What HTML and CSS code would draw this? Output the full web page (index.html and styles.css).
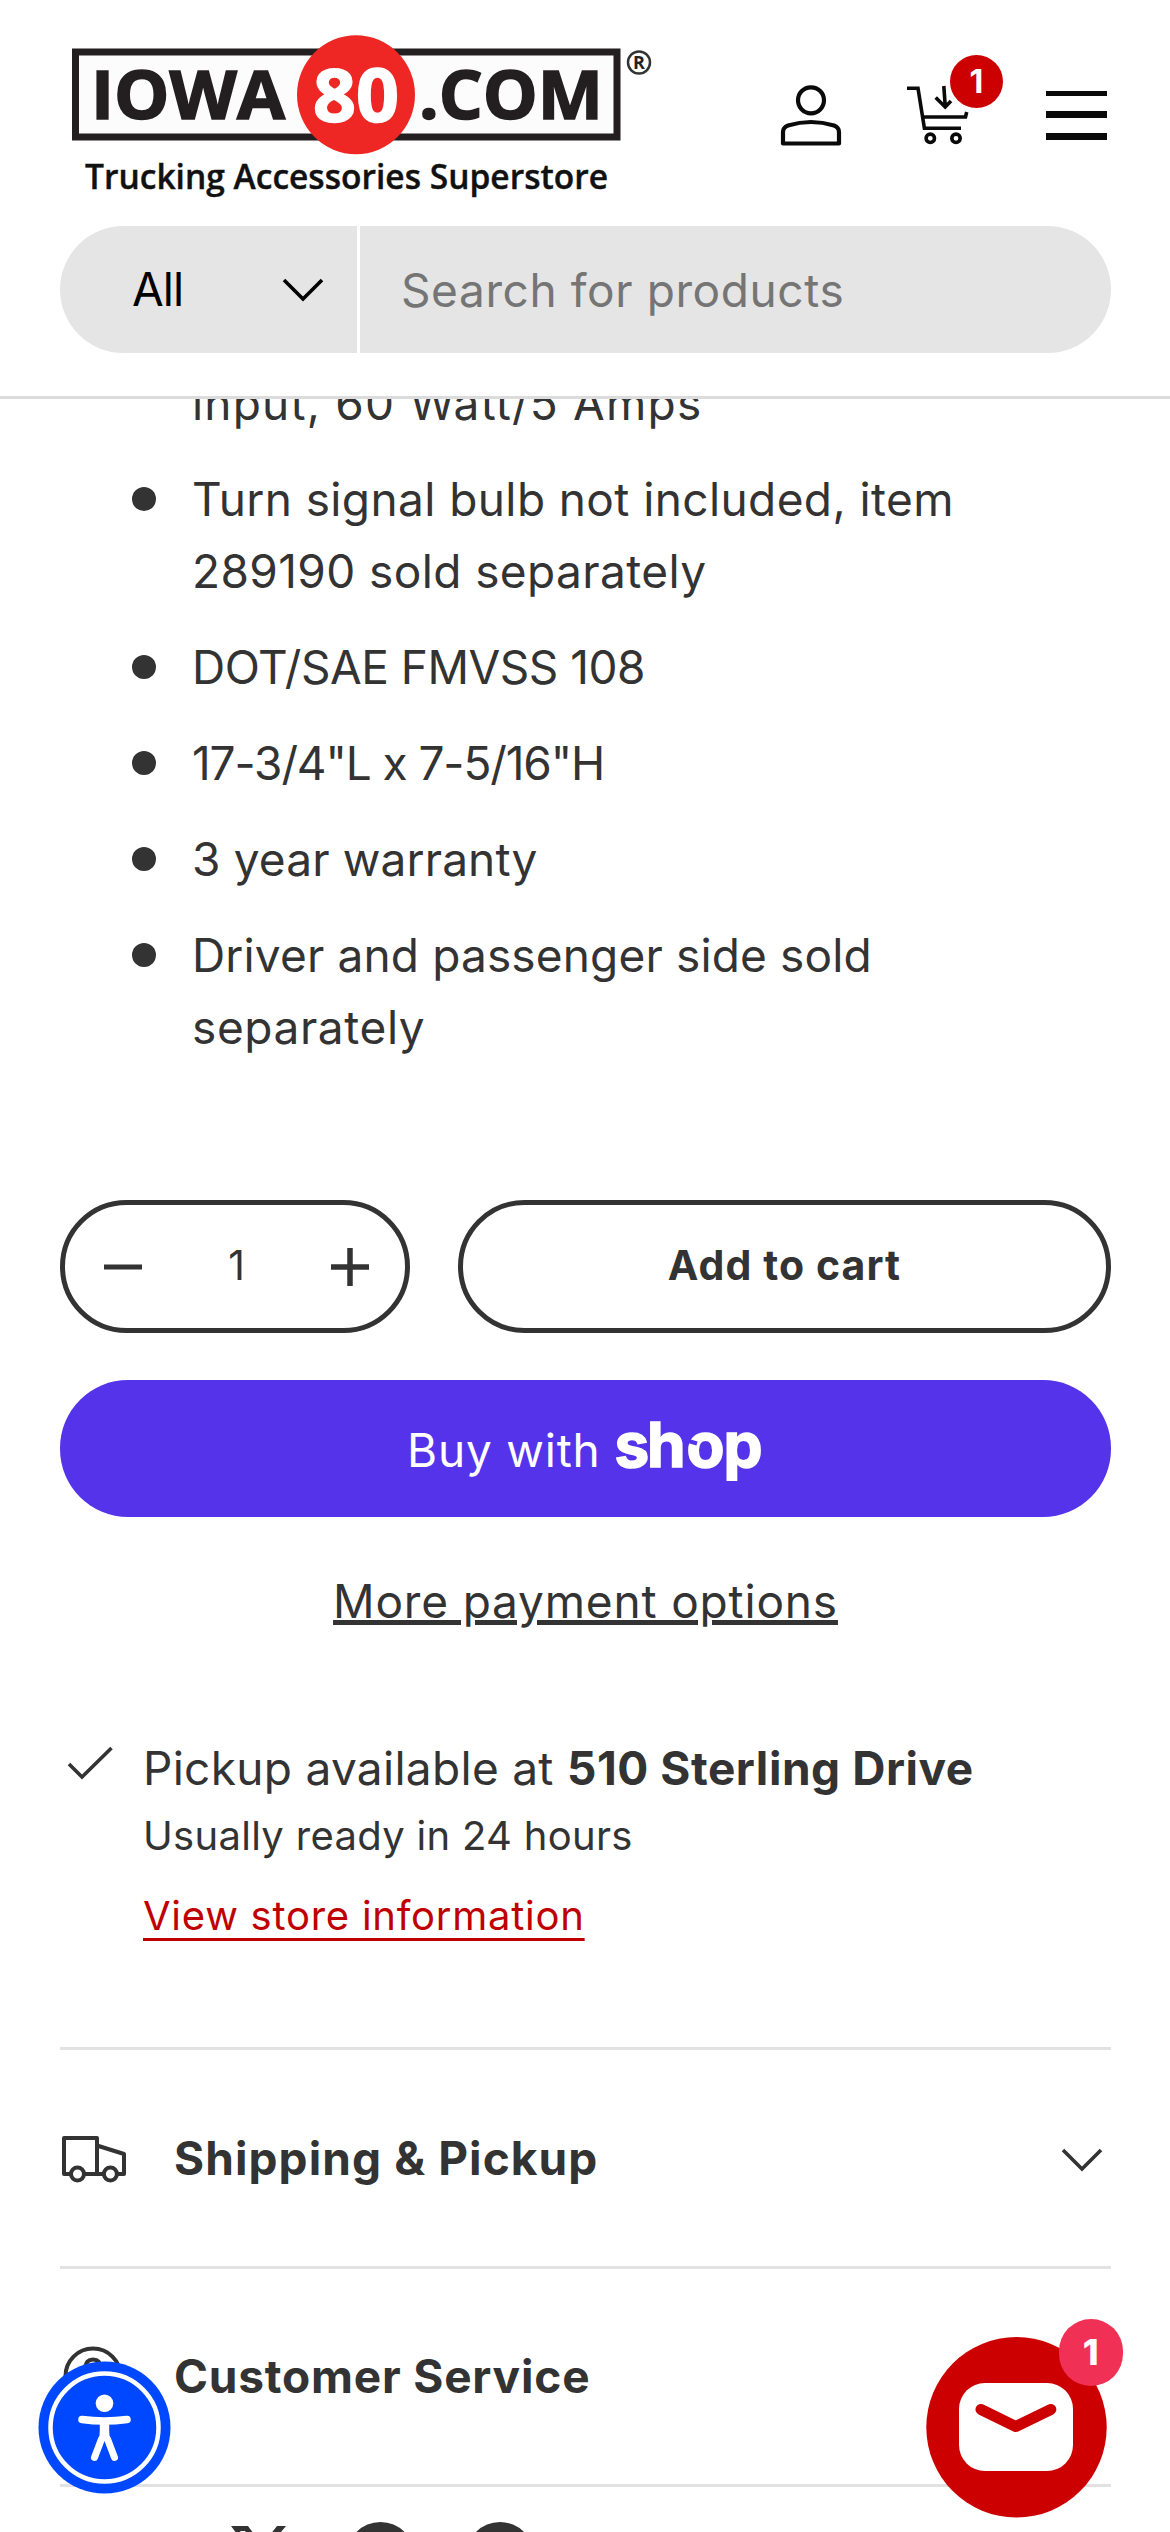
FILE: index.html
```html
<!DOCTYPE html>
<html lang="en">
<head>
<meta charset="utf-8">
<title>Iowa80.com</title>
<link rel="stylesheet" href="styles.css">
</head>
<body>
<header class="header">
  <div class="topbar">
    <svg class="logo" viewBox="60 20 610 190" width="610" height="190" font-family="Open Sans, sans-serif" font-weight="700">
      <rect x="75.500" y="52" width="541.500" height="85" fill="#fdfcfd" stroke="#231f20" stroke-width="7"/>
      <ellipse cx="356" cy="94.700" rx="59" ry="59.500" fill="#ee2724"/>
      <g font-size="66" stroke-width="1.600">
        <text x="91" y="119" textLength="194" lengthAdjust="spacingAndGlyphs" fill="#231f20" stroke="#231f20">IOWA</text>
        <text x="313" y="121.500" font-size="73" textLength="86" lengthAdjust="spacingAndGlyphs" fill="#fff" stroke="#fff">80</text>
        <text x="419" y="119" textLength="184" lengthAdjust="spacingAndGlyphs" fill="#231f20" stroke="#231f20">.COM</text>
      </g>
      <text x="85" y="188.500" font-size="34" font-weight="600" textLength="523" lengthAdjust="spacingAndGlyphs" fill="#111" stroke="#111" stroke-width=".4">Trucking Accessories Superstore</text>
      <circle cx="639" cy="62.500" r="11" fill="none" stroke="#333" stroke-width="2.500"/>
      <text x="633" y="69" font-size="18" fill="#222">R</text>
    </svg>
    <svg class="icon-user" viewBox="776 80 70 70" width="70" height="70" fill="none" stroke="#0a0a0a" stroke-width="4.200">
      <circle cx="811" cy="100.300" r="13"/>
      <path d="M783 143.500V132q0-4.500 5-6.500Q811 118.500 834 125.500q5 2 5 6.500v11.500z" stroke-linejoin="round"/>
    </svg>
    <div class="cart">
      <svg viewBox="900 76 80 74" width="80" height="74" fill="none" stroke="#0a0a0a" stroke-width="3.600">
        <path d="M907 88.300h11l6.400 40H961M923.500 117H965.500l1.200-5"/>
        <circle cx="930.300" cy="138.300" r="4.200"/><circle cx="956" cy="138.300" r="4.200"/>
        <path d="M943.800 86l1.500 21M935.700 97.500l9.500 9.500 5.800-6"/>
      </svg>
      <span class="cart-count">1</span>
    </div>
    <div class="menu"><i class="thin"></i><i></i><i></i></div>
  </div>
  <div class="search">
    <div class="search-type"><span class="all">All</span>
      <svg width="42" height="24" viewBox="0 0 42 24" fill="none" stroke="#000" stroke-width="3.600"><path d="M2 2l19 19L40 2"/></svg>
    </div>
    <div class="search-field">Search for products</div>
  </div>
</header>
<main class="main">
  <ul class="features">
    <li class="continued">input, 60 Watt/5 Amps</li>
    <li>Turn signal bulb not included, item<br>289190 sold separately</li>
    <li class="track-tight">DOT/SAE FMVSS 108</li>
    <li class="track-tighter">17-3/4"L x 7-5/16"H</li>
    <li class="track-snug">3 year warranty</li>
    <li class="track-snug">Driver and passenger side sold<br><span class="track-loose">separately</span></li>
  </ul>
  <div class="buy-row">
    <div class="qty">
      <svg width="38" height="38" viewBox="0 0 38 38"><path d="M0 19h38" stroke="#333" stroke-width="5"/></svg>
      <span>1</span>
      <svg width="38" height="38" viewBox="0 0 38 38"><path d="M0 19h38M19 0v38" stroke="#333" stroke-width="5.500"/></svg>
    </div>
    <div class="add">Add to cart</div>
  </div>
  <div class="shop-pay">
    <span class="buy-with">Buy with</span>
    <svg viewBox="610 1400 160 96" width="160" height="96"><text class="shop-word" x="614.500 647 686.500 723.500" y="1467">shop</text><path d="M685 1440l12 3.500" stroke="#5433eb" stroke-width="4"/></svg>
  </div>
  <div class="more"><span>More payment options</span></div>
  <div class="pickup">
    <svg width="50" height="40" viewBox="66 1745 50 40" fill="none" stroke="#333" stroke-width="3.600"><path d="M69 1764l13 13 29.500-29"/></svg>
    <div>
      <p class="pickup-title">Pickup available at <b>510 Sterling Drive</b></p>
      <p class="pickup-time">Usually ready in 24 hours</p>
      <p class="pickup-link"><span>View store information</span></p>
    </div>
  </div>
  <div class="row">
    <svg width="70" height="52" viewBox="60 2132 70 52" fill="none" stroke="#333" stroke-width="4" stroke-linejoin="round"><path d="M70 2174H64V2138H97V2174H85M97 2145.500L124 2154V2174H118M97 2174H103"/><circle cx="77.500" cy="2174" r="6.500"/><circle cx="110.400" cy="2174" r="6.500"/></svg>
    <span>Shipping &amp; Pickup</span>
    <svg class="chev" width="42" height="24" viewBox="0 0 42 24" fill="none" stroke="#333" stroke-width="3.600"><path d="M2 2l19 19L40 2"/></svg>
  </div>
  <div class="row">
    <svg width="70" height="62" viewBox="60 2345 70 62" fill="none" stroke="#333" stroke-width="4"><circle cx="93" cy="2376" r="27.500"/><path d="M85.500 2368q0-8.500 7.500-8.500t7.500 8.500q0 4-7.500 8v6"/></svg>
    <span class="service">Customer Service</span>
  </div>
  <div class="social">
    <svg viewBox="231 2522 320 70" width="320" height="70" fill="#333">
      <path d="M231 2526h17l14 19 15-19h9l-20 24 22 30h-17l-15-21-17 21h-9l22-26z"/>
      <path d="M240 2531h5l34 45h-5z" fill="#fff"/>
      <circle cx="380.500" cy="2556" r="34"/><circle cx="500" cy="2556" r="34"/>
    </svg>
  </div>
</main>
<div class="a11y">
  <svg viewBox="38 2361 133 133" width="133" height="133">
    <circle cx="104.500" cy="2427.500" r="66" fill="#0048ff"/>
    <circle cx="104.500" cy="2427.500" r="54" fill="none" stroke="#fff" stroke-width="4.500"/>
    <g fill="#fff" stroke="#fff" stroke-linecap="round" stroke-linejoin="round">
      <circle cx="104.500" cy="2403.300" r="8.800" stroke="none"/>
      <path d="M82 2419.500q22 3 45 0" fill="none" stroke-width="7.500"/>
      <path d="M101 2423h7q-.5 15 2 20l5.500 14.500-11-20-11 20L99 2443q2.500-5 2-20z" stroke-width="2.500"/>
      <path d="M101.500 2439L94.500 2457.500M107.500 2439L114.500 2457.500" stroke-width="7"/>
    </g>
  </svg>
</div>
<div class="chat">
  <svg viewBox="926 2337 181 181" width="181" height="181">
    <circle cx="1016.500" cy="2427.300" r="90.200" fill="#c00"/>
    <rect x="959" y="2383" width="114" height="88" rx="26" fill="#fff"/>
    <path d="M981 2409.500l34.800 17 35-17" fill="none" stroke="#c00" stroke-width="11" stroke-linecap="round" stroke-linejoin="round"/>
  </svg>
  <span class="chat-count">1</span>
</div>
</body>
</html>
```
FILE: styles.css
```css
* { box-sizing: border-box; }
body { margin: 0; width: 1170px; height: 2532px; overflow: hidden; position: relative; background: #fff; color: #333; font: 400 46px/72px Inter, sans-serif; white-space: nowrap; }
p, ul { margin: 0; padding: 0; }
svg { display: block; flex: none; }

.header { height: 399px; border-bottom: 3px solid #dcdcdc; padding: 20px 59px 0 60px; }
.topbar { display: flex; height: 205.5px; align-items: flex-start; }
.icon-user { margin: 60px 0 0 106px; }
.cart { position: relative; margin: 56px 0 0 54px; width: 80px; }
.cart-count { position: absolute; left: 50px; top: -21px; width: 53px; height: 53px; border-radius: 50%; background: #c00; color: #fff; font-size: 32px; font-weight: 700; line-height: 53px; text-align: center; }
.menu { display: flex; flex-direction: column; gap: 14.5px; width: 61px; margin: 71px 0 0 66px; }
.menu i { height: 7.5px; background: #0a0a0a; }
.menu .thin { height: 5px; }

.search { display: flex; height: 127.5px; border-radius: 64px; background: #e5e5e5; line-height: 129px; }
.search-type { display: flex; align-items: center; justify-content: space-between; width: 300px; padding: 0 33px 0 72px; border-right: 3px solid #fff; color: #000; }
.all { letter-spacing: -1px; padding-top: 1px; }
.search-type svg { margin-top: 2px; }
.search-field { padding-left: 41px; color: #757575; letter-spacing: .6px; }

.main { height: 2133px; overflow: hidden; padding: 0 59px 0 60px; }
.features { margin-top: -32.5px; padding-left: 132px; list-style: none; letter-spacing: .4px; }
.features li { margin-bottom: 24px; position: relative; }
.features li:last-child { margin-bottom: 0; }
.features li::before { content: ""; position: absolute; left: -60px; top: 24.5px; width: 24px; height: 24px; border-radius: 50%; background: #333; }
.features .continued { letter-spacing: 1.2px; }
.features .continued::before { content: none; }
.track-tight { letter-spacing: -.5px; }
.track-tighter { letter-spacing: -1.1px; }
.track-snug { letter-spacing: .15px; }
.track-loose { letter-spacing: .6px; }

.buy-row { display: flex; gap: 48px; margin-top: 137.5px; height: 132.5px; }
.qty, .add { display: flex; align-items: center; border: 5px solid #333; border-radius: 67px; font-size: 41px; }
.qty { width: 350px; justify-content: space-between; padding: 1px 36px 0 39px; }
.qty span { position: relative; top: -2px; }
.add { flex: 1; justify-content: center; padding-bottom: 3px; font-size: 41px; font-weight: 700; letter-spacing: 1.1px; }

.shop-pay { display: flex; align-items: center; gap: 9px; height: 136.5px; margin-top: 47.5px; padding-left: 347px; border-radius: 68px; background: #5433eb; color: #fff; }
.buy-with { width: 194px; padding-top: 3px; letter-spacing: .8px; }
.shop-word { font: 700 62px Inter, sans-serif; fill: #fff; stroke: #fff; stroke-width: 1.6px; }
.more { margin-top: 48.5px; text-align: center; letter-spacing: .83px; }
.more span { text-decoration: underline; text-decoration-thickness: 4.5px; text-underline-offset: 2px; }

.pickup { display: flex; gap: 26px; margin-top: 95px; padding-left: 6px; letter-spacing: .3px; }
.pickup > svg { margin-top: 13px; }
.pickup > div { padding-left: 1px; }
.pickup b { letter-spacing: .55px; }
.pickup-time, .pickup-link { font-size: 40px; line-height: 60px; }
.pickup-time { margin-top: 1.5px; }
.pickup-link { margin-top: 20.5px; color: #c00000; letter-spacing: .75px; }
.pickup-link span { text-decoration: underline; text-decoration-thickness: 3px; text-underline-offset: 8px; }

.row { display: flex; align-items: center; height: 218.5px; border-top: 3px solid #e2e2e2; font-weight: 700; letter-spacing: 1.1px; }
.row span { margin-left: 44px; }
.row .service { letter-spacing: .8px; }
.row .chev { margin: 4px 8px 0 auto; }
.pickup + .row { margin-top: 101px; }
.social { border-top: 3px solid #e2e2e2; padding: 35px 0 0 171px; }

.a11y { position: absolute; left: 38px; top: 2361px; }
.chat { position: absolute; left: 926px; top: 2337px; }
.chat-count { position: absolute; left: 132.5px; top: -18.5px; width: 64.5px; height: 67px; border-radius: 33px; background: #f03055; color: #fff; font-size: 36px; font-weight: 800; line-height: 67px; text-align: center; }
```
